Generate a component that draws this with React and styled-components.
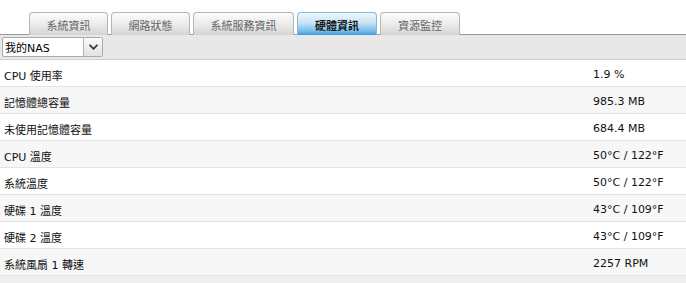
import React from "react";
import styled, { createGlobalStyle } from "styled-components";

const Global = createGlobalStyle`
  html, body { margin: 0; padding: 0; background: #ffffff; }
  body { font-family: "DejaVu Sans", "Noto Sans CJK TC", sans-serif; font-size: 11px; color: #111; }
`;

const Page = styled.div`
  width: 686px;
  height: 283px;
  overflow: hidden;
  background: #efefef;
`;

const TabBar = styled.div`
  display: flex;
  align-items: flex-end;
  gap: 3px;
  height: 35px;
  padding-left: 29px;
  box-sizing: border-box;
  background: #fff;
  border-bottom: 1px solid #9a9a9a;
`;

const Tab = styled.div`
  width: ${(p) => p.$w}px;
  height: 23px;
  box-sizing: border-box;
  display: flex;
  align-items: center;
  justify-content: center;
  padding-top: 1px;
  border: 1px solid ${(p) => (p.$active ? "#8fb6d2" : "#b5b5b5")};
  border-bottom: none;
  border-radius: 4px 4px 0 0;
  margin-bottom: -1px;
  font-size: 11px;
  color: ${(p) => (p.$active ? "#1a1a1a" : "#666")};
  font-weight: ${(p) => (p.$active ? "bold" : "normal")};
  background: ${(p) =>
    p.$active
      ? "linear-gradient(to bottom, #eef7fd 0%, #c9e4f6 45%, #6db9ea 85%, #3c9bd8 100%)"
      : "linear-gradient(to bottom, #fbfbfb 0%, #ececec 50%, #d4d4d4 100%)"};
`;

const Toolbar = styled.div`
  height: 24px;
  background: #e8e8e8;
  border-bottom: 1px solid #cfcfcf;
  display: flex;
  align-items: center;
  padding-left: 2px;
`;

const Select = styled.div`
  width: 101px;
  height: 20px;
  box-sizing: border-box;
  display: flex;
  border: 1px solid #a9a9a9;
  border-radius: 2px;
  background: #fff;
`;

const SelectText = styled.div`
  flex: 1;
  display: flex;
  align-items: center;
  padding-left: 2px;
  font-size: 11px;
  color: #000;
`;

const SelectArrow = styled.div`
  width: 18px;
  border-left: 1px solid #b5b5b5;
  background: linear-gradient(to bottom, #fafafa, #e2e2e2);
  display: flex;
  align-items: center;
  justify-content: center;
`;

const Table = styled.div`
  display: flex;
  flex-direction: column;
`;

const Row = styled.div`
  height: 26px;
  box-sizing: border-box;
  padding-top: 3px;
  display: grid;
  grid-template-columns: 593px 1fr;
  align-items: center;
  background: ${(p) => (p.$alt ? "#f7f7f7" : "#ffffff")};
  border-bottom: 1px solid #e3e3e3;
  height: 27px;
`;

const Label = styled.div`
  padding-left: 4px;
  color: #111;
`;

const Value = styled.div`
  color: #111;
`;

const tabs = [
  { label: "系統資訊", w: 79 },
  { label: "網路狀態", w: 79 },
  { label: "系統服務資訊", w: 101 },
  { label: "硬體資訊", w: 80, active: true },
  { label: "資源監控", w: 80 },
];

const rows = [
  ["CPU 使用率", "1.9 %"],
  ["記憶體總容量", "985.3 MB"],
  ["未使用記憶體容量", "684.4 MB"],
  ["CPU 溫度", "50°C / 122°F"],
  ["系統溫度", "50°C / 122°F"],
  ["硬碟 1 溫度", "43°C / 109°F"],
  ["硬碟 2 溫度", "43°C / 109°F"],
  ["系統風扇 1 轉速", "2257 RPM"],
];

export default function App() {
  return (
    <Page>
      <Global />
      <TabBar>
        {tabs.map((t) => (
          <Tab key={t.label} $w={t.w} $active={t.active}>
            {t.label}
          </Tab>
        ))}
      </TabBar>
      <Toolbar>
        <Select>
          <SelectText>我的NAS</SelectText>
          <SelectArrow>
            <svg width="9" height="6" viewBox="0 0 9 6">
              <path d="M0.5 0.8 L4.5 4.8 L8.5 0.8" fill="none" stroke="#333" strokeWidth="1.8" />
            </svg>
          </SelectArrow>
        </Select>
      </Toolbar>
      <Table>
        {rows.map(([k, v], i) => (
          <Row key={k} $alt={i % 2 === 1}>
            <Label>{k}</Label>
            <Value>{v}</Value>
          </Row>
        ))}
      </Table>
    </Page>
  );
}
